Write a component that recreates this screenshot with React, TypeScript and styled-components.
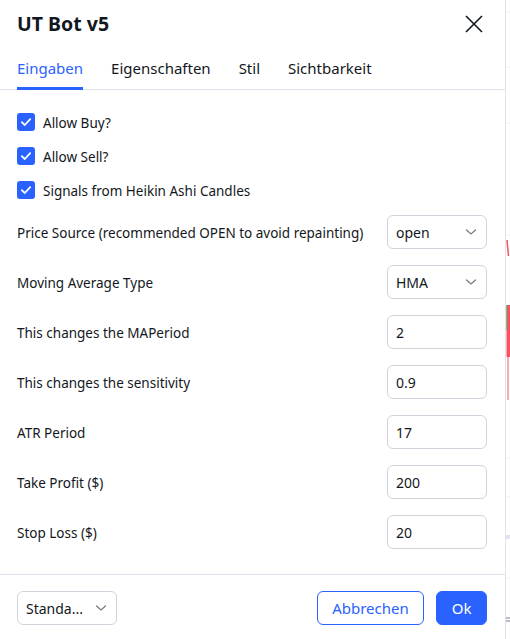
import React from "react";
import styled, { createGlobalStyle } from "styled-components";

const Global = createGlobalStyle`
  html, body { margin: 0; padding: 0; background: #ffffff; }
  body { font-family: "Noto Sans", "Liberation Sans", sans-serif; color: #131722; }
  * { box-sizing: border-box; }
`;

const Page = styled.div`
  display: flex;
  width: 510px;
  height: 639px;
  overflow: hidden;
`;

const Dialog = styled.div`
  width: 506px;
  flex: none;
  height: 639px;
  display: flex;
  flex-direction: column;
  background: #ffffff;
  border-right: 1px solid #e0e3eb;
`;

const ChartStrip = styled.svg`
  flex: 1;
  height: 639px;
  display: block;
`;

const Header = styled.div`
  height: 48px;
  display: flex;
  align-items: center;
  justify-content: space-between;
  padding: 0 19px 0 17px;
`;

const Title = styled.h1`
  margin: 0;
  font-size: 19.5px;
  font-weight: 700;
  line-height: 28px;
  color: #131722;
`;

const CloseButton = styled.button`
  border: 0;
  background: none;
  padding: 0;
  width: 24px;
  height: 24px;
  display: flex;
  align-items: center;
  justify-content: center;
  color: #131722;
  cursor: pointer;
`;

const TabBar = styled.div`
  display: flex;
  gap: 28px;
  padding: 0 17px;
  border-bottom: 1px solid #e0e3eb;
`;

const Tab = styled.div<{ $active?: boolean }>`
  height: 42px;
  display: flex;
  align-items: center;
  font-size: 15px;
  padding-top: 1px;
  border-bottom: 3px solid ${(p) => (p.$active ? "#2962ff" : "transparent")};
  color: ${(p) => (p.$active ? "#2962ff" : "#131722")};
  margin-bottom: -1px;
`;

const Content = styled.div`
  flex: 1;
  padding: 15px 18px 0 17px;
  display: flex;
  flex-direction: column;
`;

const CheckRow = styled.label`
  height: 34px;
  display: flex;
  align-items: center;
  gap: 8px;
  font-size: 13.5px;
`;

const Label = styled.span<{ $shift?: number }>`
  padding-top: ${(p) => p.$shift ?? 2}px;
`;

const Box = styled.span`
  width: 18px;
  height: 18px;
  border-radius: 3px;
  background: #2962ff;
  display: flex;
  align-items: center;
  justify-content: center;
  flex: none;
`;

const Fields = styled.div`
  margin-top: 8px;
  display: flex;
  flex-direction: column;
  gap: 16px;
`;

const FieldRow = styled.div`
  height: 34px;
  display: flex;
  align-items: center;
  justify-content: space-between;
  font-size: 13.5px;
`;

const Control = styled.div`
  width: 100px;
  height: 34px;
  border: 1px solid #d1d4dc;
  border-radius: 6px;
  display: flex;
  align-items: center;
  justify-content: space-between;
  padding: 0 9px 0 8px;
  font-size: 14px;
  color: #131722;
`;

const Footer = styled.div`
  border-top: 1px solid #e0e3eb;
  height: 65px;
  display: flex;
  align-items: flex-start;
  padding: 16px 18px 0 17px;
  gap: 12px;
`;

const Spacer = styled.div`
  flex: 1;
`;

const Button = styled.button<{ $primary?: boolean }>`
  height: 34px;
  padding: 0 14.5px;
  border-radius: 6px;
  font-family: inherit;
  font-size: 15px;
  border: 1px solid #2962ff;
  background: ${(p) => (p.$primary ? "#2962ff" : "#ffffff")};
  color: ${(p) => (p.$primary ? "#ffffff" : "#2962ff")};
  cursor: pointer;
`;

const Chevron = () => (
  <svg width="12" height="8" viewBox="0 0 12 8" fill="none">
    <path d="M1.5 2l4.5 4 4.5-4" stroke="#787b86" strokeWidth="1.3" strokeLinecap="round" />
  </svg>
);

const Check = () => (
  <svg width="12" height="10" viewBox="0 0 12 10" fill="none">
    <path d="M1.8 5.2l3 2.8L10.2 2.2" stroke="#ffffff" strokeWidth="1.8" strokeLinecap="round" strokeLinejoin="round" />
  </svg>
);

const checks = ["Allow Buy?", "Allow Sell?", "Signals from Heikin Ashi Candles"];

const fields: { label: string; value: string; select?: boolean }[] = [
  { label: "Price Source (recommended OPEN to avoid repainting)", value: "open", select: true },
  { label: "Moving Average Type", value: "HMA", select: true },
  { label: "This changes the MAPeriod", value: "2" },
  { label: "This changes the sensitivity", value: "0.9" },
  { label: "ATR Period", value: "17" },
  { label: "Take Profit ($)", value: "200" },
  { label: "Stop Loss ($)", value: "20" },
];

export default function App() {
  return (
    <Page>
      <Global />
      <Dialog>
        <Header>
          <Title>UT Bot v5</Title>
          <CloseButton aria-label="close">
            <svg width="18" height="18" viewBox="0 0 18 18" fill="none">
              <path d="M1 1l16 16M17 1L1 17" stroke="#131722" strokeWidth="1.6" />
            </svg>
          </CloseButton>
        </Header>
        <TabBar>
          <Tab $active>Eingaben</Tab>
          <Tab>Eigenschaften</Tab>
          <Tab>Stil</Tab>
          <Tab>Sichtbarkeit</Tab>
        </TabBar>
        <Content>
          {checks.map((c) => (
            <CheckRow key={c}>
              <Box>
                <Check />
              </Box>
              <Label $shift={1}>{c}</Label>
            </CheckRow>
          ))}
          <Fields>
            {fields.map((f) => (
              <FieldRow key={f.label}>
                <Label>{f.label}</Label>
                <Control>
                  <span>{f.value}</span>
                  {f.select && <Chevron />}
                </Control>
              </FieldRow>
            ))}
          </Fields>
        </Content>
        <Footer>
          <Control>
            <span>Standa...</span>
            <Chevron />
          </Control>
          <Spacer />
          <Button>Abbrechen</Button>
          <Button $primary>Ok</Button>
        </Footer>
      </Dialog>
      <ChartStrip viewBox="0 0 4 639" preserveAspectRatio="none">
        <rect x="0" y="0" width="4" height="639" fill="#ffffff" />
        <line x1="0" y1="12" x2="4" y2="12" stroke="#eef0f4" />
        <line x1="0" y1="67" x2="4" y2="67" stroke="#eef0f4" />
        <line x1="0" y1="123" x2="4" y2="123" stroke="#eef0f4" />
        <line x1="0" y1="235" x2="4" y2="235" stroke="#eef0f4" />
        <path d="M1 240 L2.5 256" stroke="#f7525f" strokeWidth="1.5" />
        <rect x="0.5" y="305" width="3.5" height="52" fill="#f7525f" />
        <line x1="1" y1="305" x2="1" y2="330" stroke="#4caf50" strokeWidth="1" />
        <line x1="2" y1="357" x2="2" y2="400" stroke="#f7525f" strokeWidth="1" />
        <line x1="0" y1="458" x2="4" y2="458" stroke="#eef0f4" />
        <line x1="0" y1="497" x2="4" y2="497" stroke="#eef0f4" />
        <rect x="0" y="535" width="4" height="4" fill="#e0e3eb" />
        <line x1="0" y1="578" x2="4" y2="578" stroke="#eef0f4" />
        <line x1="0" y1="618" x2="4" y2="618" stroke="#787b86" />
        <line x1="0" y1="621" x2="4" y2="621" stroke="#787b86" />
      </ChartStrip>
    </Page>
  );
}
